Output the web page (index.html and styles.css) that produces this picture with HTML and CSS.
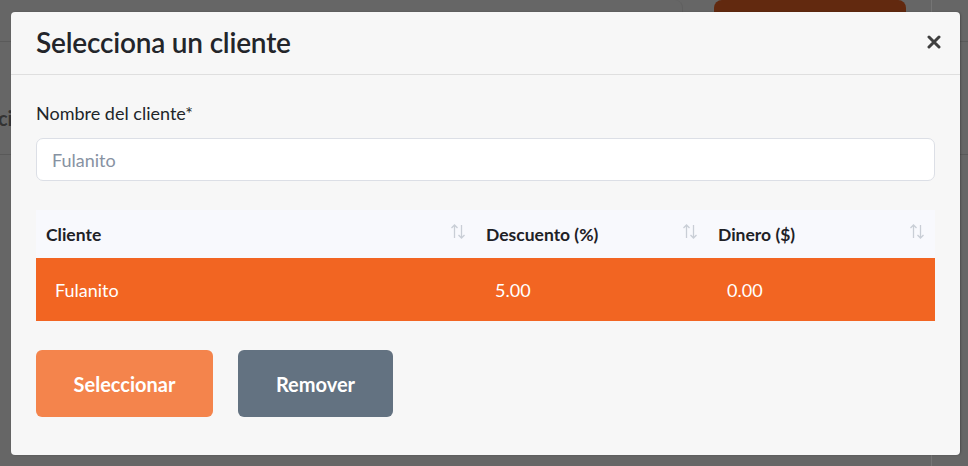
FILE: index.html
```html
<!DOCTYPE html>
<html lang="es">
<head>
<meta charset="utf-8">
<title>Selecciona un cliente</title>
<link rel="stylesheet" href="styles.css">
</head>
<body>
<div class="page">
  <div class="topbar">
    <div class="card-top"></div>
    <div class="btn-back"></div>
    <div class="side-line"></div>
  </div>
  <div class="subbar"><span class="ghost">Facturaci</span></div>
</div>

<div class="modal" role="dialog">
  <div class="modal-header">
    <h4 class="modal-title">Selecciona un cliente</h4>
    <button class="close" aria-label="Cerrar">
      <svg width="14" height="14" viewBox="0 0 14 14"><path d="M2 2 L12 12 M12 2 L2 12" stroke="#3f3f3f" stroke-width="3" stroke-linecap="round"/></svg>
    </button>
  </div>
  <div class="modal-body">
    <label class="label">Nombre del cliente*</label>
    <input class="input" type="text" placeholder="Fulanito">
    <table class="table">
      <colgroup><col class="c1"><col class="c2"><col class="c3"></colgroup>
      <thead>
        <tr>
          <th><div class="th"><span>Cliente</span><svg class="sort" viewBox="0 0 16 16"><path d="M4.5 15V2 M1.5 5l3-3 3 3 M11.5 2v13 M8.5 12l3 3 3-3" fill="none" stroke="#c9ced6" stroke-width="1.3"/></svg></div></th>
          <th><div class="th"><span>Descuento (%)</span><svg class="sort" viewBox="0 0 16 16"><path d="M4.5 15V2 M1.5 5l3-3 3 3 M11.5 2v13 M8.5 12l3 3 3-3" fill="none" stroke="#c9ced6" stroke-width="1.3"/></svg></div></th>
          <th><div class="th"><span>Dinero ($)</span><svg class="sort" viewBox="0 0 16 16"><path d="M4.5 15V2 M1.5 5l3-3 3 3 M11.5 2v13 M8.5 12l3 3 3-3" fill="none" stroke="#c9ced6" stroke-width="1.3"/></svg></div></th>
        </tr>
      </thead>
      <tbody>
        <tr class="selected"><td>Fulanito</td><td>5.00</td><td>0.00</td></tr>
      </tbody>
    </table>
    <div class="actions">
      <button class="btn btn-primary">Seleccionar</button>
      <button class="btn btn-secondary">Remover</button>
    </div>
  </div>
</div>
</body>
</html>
```

FILE: styles.css
```css
* { box-sizing: border-box; }
html, body { margin: 0; height: 100%; }
body {
  background: #666666;
  font-family: Lato, "Noto Sans", sans-serif;
  color: #212529;
  overflow: hidden;
}
.page { height: 466px; position: relative; }
.topbar {
  height: 42px;
  border-bottom: 1px solid #5a5a5a;
  display: flex;
  align-items: flex-start;
}
.card-top {
  width: 683px;
  height: 14px;
  border-right: 1px solid #5f5f5f;
  border-top-right-radius: 8px;
}
.btn-back {
  margin-left: 31px;
  width: 192px;
  height: 20px;
  background: #62290f;
  border-radius: 8px 8px 0 0;
}
.side-line {
  margin-left: 25px;
  width: 1px;
  height: 466px;
  background: #757575;
}
.subbar {
  height: 113px;
  border-bottom: 1px solid #595959;
  display: flex;
  align-items: flex-start;
  padding-top: 64px;
}
.ghost {
  margin-left: -68px;
  font-size: 20px;
  line-height: 24px;
  font-weight: 700;
  color: #333333;
}

.modal {
  position: absolute;
  top: 12px;
  left: 11px;
  width: 949px;
  height: 443px;
  background: #f7f7f7;
  border-radius: 4px;
  box-shadow: 1px 0 2px rgba(0,0,0,0.25);
  display: flex;
  flex-direction: column;
}
.modal-header {
  height: 63px;
  border-bottom: 1px solid #dfdfdf;
  display: flex;
  align-items: center;
  justify-content: space-between;
  padding: 0 19px 2px 25px;
}
.modal-title {
  margin: 0;
  font-size: 28px;
  font-weight: 600;
  color: #23252a;
  letter-spacing: -0.2px;
}
.close {
  border: 0;
  background: none;
  padding: 0;
  width: 14px;
  height: 14px;
  display: flex;
}
.modal-body {
  padding: 28px 25px 0 25px;
  display: flex;
  flex-direction: column;
}
.label {
  font-size: 18px;
  line-height: 20px;
  color: #212529;
}
.input {
  margin-top: 15px;
  height: 43px;
  border: 1px solid #dcdfe6;
  border-radius: 7px;
  background: #ffffff;
  padding: 0 15px;
  font-family: inherit;
  font-size: 18px;
  color: #212529;
  outline: none;
}
.input::placeholder { color: #8792a2; }
.table {
  margin-top: 29px;
  width: 899px;
  border-collapse: collapse;
  table-layout: fixed;
  font-size: 18px;
}
.c1 { width: 440px; }
.c2 { width: 232px; }
.c3 { width: 227px; }
thead th {
  background: #f8f9fd;
  height: 48px;
  padding: 0 10px;
  text-align: left;
  font-size: 17.5px;
  font-weight: 700;
  color: #1e2126;
}
.th {
  display: flex;
  align-items: center;
  justify-content: space-between;
}
.sort { width: 16px; height: 16px; margin-top: -6px; }
tbody td {
  height: 63px;
  padding: 0 19px;
  background: #f26522;
  color: #ffffff;
}
.actions {
  margin-top: 29px;
  display: flex;
  gap: 25px;
}
.btn {
  height: 67px;
  border: 0;
  border-radius: 6px;
  font-family: inherit;
  font-size: 20px;
  font-weight: 700;
  color: #ffffff;
}
.btn-primary { width: 177px; background: #f4844c; }
.btn-secondary { width: 155px; background: #637281; }
```
